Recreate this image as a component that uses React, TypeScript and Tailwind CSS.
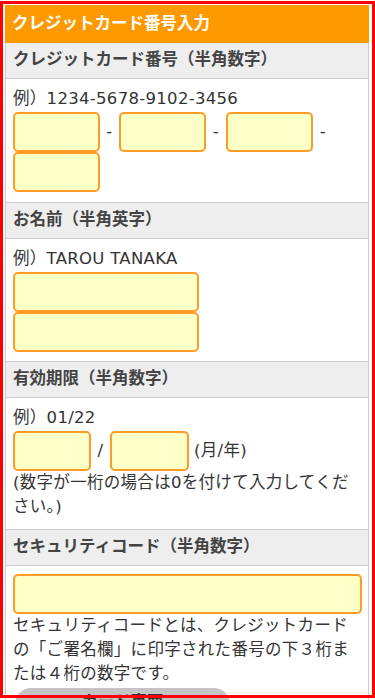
import React from "react";

const font = { fontFamily: '"DejaVu Sans", "Noto Sans CJK JP", sans-serif' };

function Field({ w }: { w: string }) {
  return (
    <div
      className={`${w} h-[40px] shrink-0 rounded-[5px] border-2 border-[#ff9c27] bg-[#ffffc8]`}
    />
  );
}

function Head({ children }: { children: React.ReactNode }) {
  return (
    <div className="flex h-[36px] items-center border-b border-[#cccccc] bg-[#eeeeee] pl-[7px] text-[16.5px] font-bold text-[#444444]">
      {children}
    </div>
  );
}

export default function App() {
  return (
    <div className="relative min-h-[760px] bg-white text-[#333333]" style={font}>
      <div className="ml-[5px] w-[364px] pt-[5px]">
        <div className="flex h-[38px] items-center bg-[#ff9900] pl-[7px] text-[16.5px] font-bold text-white">
          クレジットカード番号入力
        </div>
        <div className="border-x border-[#cccccc]">
          <Head>クレジットカード番号（半角数字）</Head>
          <div className="border-b border-[#cccccc] pl-[7px] pr-[6px] pt-[7px] pb-[10px] text-[16.5px] tracking-[0.3px]">
            <div className="h-[26px] leading-[26px]">例）1234-5678-9102-3456</div>
            <div className="flex flex-wrap items-center">
              <Field w="w-[87px]" />
              <span className="w-[19px] text-center">-</span>
              <Field w="w-[87px]" />
              <span className="w-[20px] text-center">-</span>
              <Field w="w-[87px]" />
              <span className="w-[20px] text-center">-</span>
              <Field w="w-[87px]" />
            </div>
          </div>
          <Head>お名前（半角英字）</Head>
          <div className="border-b border-[#cccccc] pl-[7px] pr-[6px] pt-[7px] pb-[9px] text-[16.5px] tracking-[0.3px]">
            <div className="h-[26px] leading-[26px]">例）TAROU TANAKA</div>
            <Field w="w-[186px]" />
            <Field w="w-[186px]" />
          </div>
          <Head>有効期限（半角数字）</Head>
          <div className="border-b border-[#cccccc] pl-[7px] pr-[6px] pt-[7px] pb-[10px] text-[16.5px] tracking-[0.3px]">
            <div className="h-[26px] leading-[26px]">例）01/22</div>
            <div className="flex items-center">
              <Field w="w-[78px]" />
              <span className="w-[19px] text-center">/</span>
              <Field w="w-[79px]" />
              <span className="ml-[5px]">(月/年)</span>
            </div>
            <div className="leading-[24px]">(数字が一桁の場合は0を付けて入力してください。)</div>
          </div>
          <Head>セキュリティコード（半角数字）</Head>
          <div className="pl-[7px] pr-[6px] pt-[8px] text-[16.5px] tracking-[0.3px]">
            <Field w="w-[349px]" />
            <div className="leading-[24px]">
              セキュリティコードとは、クレジットカードの「ご署名欄」に印字された番号の下３桁または４桁の数字です。
            </div>
            <div className="ml-[2px] mt-[2px] flex h-[32px] w-[215px] items-start justify-center rounded-full bg-[#c4c4c4] pt-[2px] text-[16px] font-bold text-[#333333]">
              カード裏面
            </div>
          </div>
        </div>
      </div>
      <div className="pointer-events-none absolute left-0 top-[1px] h-[697px] w-[375px] border-[3px] border-[#ff0000]" />
    </div>
  );
}
